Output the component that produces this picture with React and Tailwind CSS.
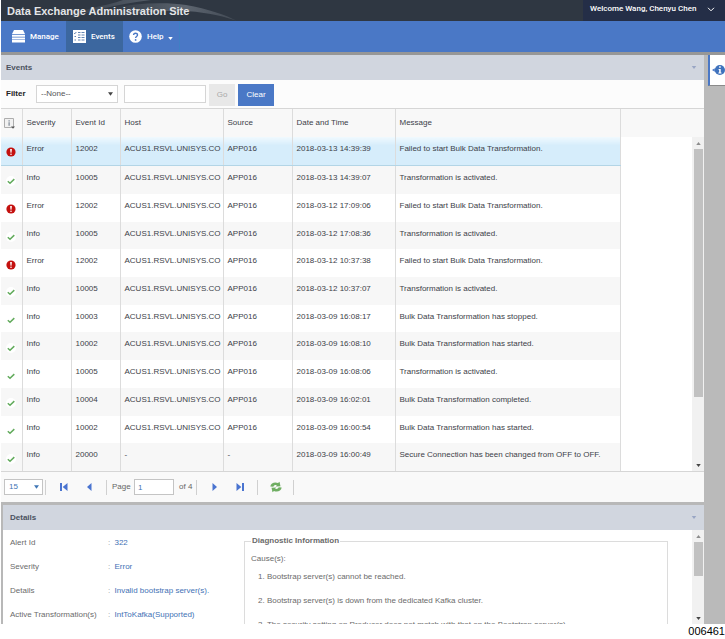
import { useState } from 'react'
import clsx from 'clsx'

const EVENTS = [
    { severity: 'Error', id: '12002', host: 'ACUS1.RSVL.UNISYS.CO', source: 'APP016', date: '2018-03-13 14:39:39', message: 'Failed to start Bulk Data Transformation.' },
    { severity: 'Info', id: '10005', host: 'ACUS1.RSVL.UNISYS.CO', source: 'APP016', date: '2018-03-13 14:39:07', message: 'Transformation is activated.' },
    { severity: 'Error', id: '12002', host: 'ACUS1.RSVL.UNISYS.CO', source: 'APP016', date: '2018-03-12 17:09:06', message: 'Failed to start Bulk Data Transformation.' },
    { severity: 'Info', id: '10005', host: 'ACUS1.RSVL.UNISYS.CO', source: 'APP016', date: '2018-03-12 17:08:36', message: 'Transformation is activated.' },
    { severity: 'Error', id: '12002', host: 'ACUS1.RSVL.UNISYS.CO', source: 'APP016', date: '2018-03-12 10:37:38', message: 'Failed to start Bulk Data Transformation.' },
    { severity: 'Info', id: '10005', host: 'ACUS1.RSVL.UNISYS.CO', source: 'APP016', date: '2018-03-12 10:37:07', message: 'Transformation is activated.' },
    { severity: 'Info', id: '10003', host: 'ACUS1.RSVL.UNISYS.CO', source: 'APP016', date: '2018-03-09 16:08:17', message: 'Bulk Data Transformation has stopped.' },
    { severity: 'Info', id: '10002', host: 'ACUS1.RSVL.UNISYS.CO', source: 'APP016', date: '2018-03-09 16:08:10', message: 'Bulk Data Transformation has started.' },
    { severity: 'Info', id: '10005', host: 'ACUS1.RSVL.UNISYS.CO', source: 'APP016', date: '2018-03-09 16:08:06', message: 'Transformation is activated.' },
    { severity: 'Info', id: '10004', host: 'ACUS1.RSVL.UNISYS.CO', source: 'APP016', date: '2018-03-09 16:02:01', message: 'Bulk Data Transformation completed.' },
    { severity: 'Info', id: '10002', host: 'ACUS1.RSVL.UNISYS.CO', source: 'APP016', date: '2018-03-09 16:00:54', message: 'Bulk Data Transformation has started.' },
    { severity: 'Info', id: '20000', host: '-', source: '-', date: '2018-03-09 16:00:49', message: 'Secure Connection has been changed from OFF to OFF.' },
]

const DETAILS = [
    ['Alert Id', '322'],
    ['Severity', 'Error'],
    ['Details', 'Invalid bootstrap server(s).'],
    ['Active Transformation(s)', 'IntToKafka(Supported)'],
]

const CAUSES = [
    'Bootstrap server(s) cannot be reached.',
    'Bootstrap server(s) is down from the dedicated Kafka cluster.',
    'The security setting on Producer does not match with that on the Bootstrap server(s).',
]

const Triangle = ({ className, up }) => (
    <svg viewBox="0 0 6 4" className={clsx('shrink-0', className)} aria-hidden="true">
        <path d={up ? 'M0 4h6L3 0z' : 'M0 0h6L3 4z'} fill="currentColor" />
    </svg>
)

const SeverityIcon = ({ severity }) =>
    severity === 'Error' ? (
        <svg viewBox="0 0 10 10" className="size-[10px]" aria-hidden="true">
            <circle cx="5" cy="5" r="4.6" fill="#c4110f" />
            <path d="M4.1 2h1.8l-.4 3.8h-1z" fill="#fff" />
            <circle cx="5" cy="7.3" r=".8" fill="#fff" />
        </svg>
    ) : (
        <svg viewBox="0 0 10 10" className="size-[10px]" aria-hidden="true">
            <circle cx="5" cy="5" r="5" fill="#fff" />
            <path d="M1.8 5.2l2.2 2 4.3-4.1" fill="none" stroke="#62ab5c" strokeWidth="1.5" />
        </svg>
    )

const ScrollBar = ({ thumb }) => (
    <div className="flex w-3 shrink-0 grow flex-col items-center bg-[#f1f1f1]" aria-hidden="true">
        <div className="flex h-3 shrink-0 items-center">
            <Triangle up className="h-[3px] w-[5px] text-[#8c8c8c]" />
        </div>
        <div className={clsx('w-[9px] bg-[#c1c1c1]', thumb)} />
        <div className="mt-auto flex h-3 shrink-0 items-center">
            <Triangle className="h-[3px] w-[5px] text-[#454545]" />
        </div>
    </div>
)

const PanelHeader = ({ title, className }) => (
    <div className={clsx('flex h-[25px] items-center justify-between bg-[#d1d6df] pr-[7px] font-bold text-[#4b5260]', className)}>
        <h2>{title}</h2>
        <button type="button" aria-label={`Collapse ${title}`}>
            <Triangle className="h-[3px] w-[6px] text-[#99a6c4]" />
        </button>
    </div>
)

const Separator = () => <div className="h-[15px] w-px bg-[#d0d0d0]" />

const PagerButton = ({ label, children }) => (
    <button type="button" aria-label={label} className="flex w-[25px] justify-center">
        <svg viewBox="0 0 10 10" className="size-[10px]" fill="#4a74d0">
            {children}
        </svg>
    </button>
)

const TopBar = () => (
    <header className="relative flex h-[21px] items-center justify-between overflow-hidden bg-[#2f3742]">
        <svg viewBox="0 0 480 21" className="absolute left-0 top-0 h-[21px] w-[480px]" aria-hidden="true">
            <defs>
                <linearGradient id="arc" x1="0" x2="1">
                    <stop offset="0" stopColor="#8b939d" stopOpacity="0" />
                    <stop offset=".6" stopColor="#8b939d" stopOpacity=".5" />
                    <stop offset="1" stopColor="#8b939d" stopOpacity=".2" />
                </linearGradient>
                <linearGradient id="band" x1="0" x2="1">
                    <stop offset="0" stopColor="#79828d" stopOpacity="0" />
                    <stop offset="1" stopColor="#79828d" stopOpacity=".5" />
                </linearGradient>
            </defs>
            <path d="M50 21C80 9 105 6 122 0h28C115 4 85 12 65 21z" fill="url(#band)" />
            <path d="M110 8C135 3 165 2 185 5c22 4 40 10 50 15.5-18-6-36-9-54-9.5-25-.5-48 2-71 7z" fill="url(#arc)" />
        </svg>
        <h1 className="relative pl-[6px] text-[11px] font-bold text-[#e4e5e7]">Data Exchange Administration Site</h1>
        <button type="button" className="relative flex h-full w-[142px] items-center justify-between bg-[#242e47] pr-[10px] pb-[3px] pl-[7px] font-[Roboto,sans-serif] font-medium text-white">
            Welcome Wang, Chenyu Chen
            <svg viewBox="0 0 8 5" className="h-[5px] w-2" fill="none" stroke="#fff" aria-hidden="true">
                <path d="M1 .8l3 3 3-3" />
            </svg>
        </button>
    </header>
)

const NavBar = () => (
    <nav className="flex h-[31px] bg-[#4a78c6] font-[Roboto,sans-serif] font-medium text-white">
        <a href="#manage" className="flex w-[65px] items-center gap-[5px] pl-[11px]">
            <svg viewBox="0 0 13 13" className="size-[13px]" fill="#fff" aria-hidden="true">
                <path d="M2 0h9l2 4H0zM0 4.7h13v2H0zM0 7.4h13v2H0zM0 10.1h13v2.4H0z" />
            </svg>
            Manage
        </a>
        <a href="#events" className="flex w-[57px] items-center gap-[5px] bg-[#3c679f] pl-[7px]">
            <svg viewBox="0 0 13 13" className="size-[13px]" aria-hidden="true">
                <path d="M0 0h13v13H0z" fill="#fff" />
                <path d="M5 2.5h2.5M8.5 2.5h3M5 5h2.5M8.5 5h3M5 7.5h2.5M8.5 7.5h3M5 10h2.5M8.5 10h3M1 3l.8.8L3.3 2M1.5 6.5h1.5M1.5 10h1.5" fill="none" stroke="#3c679f" strokeWidth=".8" />
            </svg>
            Events
        </a>
        <button type="button" className="flex w-[57px] items-center gap-[5px] border-r border-[#3f80c4] pl-[6px]">
            <svg viewBox="0 0 13 13" className="size-[13px]" aria-hidden="true">
                <circle cx="6.5" cy="6.5" r="6.3" fill="#fff" />
                <path d="M4.6 5c0-2.4 3.9-2.4 3.9 0 0 1.5-1.9 1.4-1.9 3" fill="none" stroke="#4a78c6" strokeWidth="1.4" />
                <circle cx="6.6" cy="9.9" r=".9" fill="#4a78c6" />
            </svg>
            Help
            <Triangle className="-ml-px mt-1 h-[3px] w-[5px]" />
        </button>
    </nav>
)

const FilterBar = () => {
    const [text, setText] = useState('')

    return (
        <form className="flex h-7 items-start bg-[#fcfcfc] pl-[5px] pt-1" onSubmit={(e) => e.preventDefault()}>
            <label htmlFor="filter" className="w-[30px] leading-[19px] font-bold text-[#222]">
                Filter
            </label>
            <div className="relative mt-px mr-[6px]">
                <select id="filter" className="h-[18px] w-[82px] appearance-none border border-[#d5d5d5] bg-white pl-1 text-[#555]">
                    <option>--None--</option>
                </select>
                <Triangle className="pointer-events-none absolute right-[5px] top-[7px] h-1 w-[5px] text-[#444]" />
            </div>
            <input
                type="text"
                aria-label="Filter text"
                className="mt-px mr-[3px] h-[18px] w-[82px] border border-[#d5d5d5] bg-white px-1"
                value={text}
                onChange={(e) => setText(e.target.value)}
            />
            <button type="submit" className="mr-[3px] h-[22px] w-[26px] bg-[#e8e8e8] text-[#a8a8a8]">
                Go
            </button>
            <button type="button" className="h-[22px] w-9 bg-[#4a78c6] text-white" onClick={() => setText('')}>
                Clear
            </button>
        </form>
    )
}

const EventsTable = () => {
    const [selected, setSelected] = useState(0)
    const head = 'border-r border-[#dcdcdc] pl-1 text-left font-normal'
    const cell = 'overflow-hidden border-r border-[#dcdcdc] pl-1 pt-[6px] align-top whitespace-nowrap'

    return (
        <div className="flex h-[364px] overflow-hidden border-y border-[#d6d6d6] bg-white">
            <table className="h-[362px] min-w-0 grow table-fixed text-[#3c4148]">
                <colgroup>
                    <col className="w-[21px]" />
                    <col className="w-[49px]" />
                    <col className="w-[49px]" />
                    <col className="w-[103px]" />
                    <col className="w-[69px]" />
                    <col className="w-[103px]" />
                    <col className="w-[225px]" />
                    <col />
                </colgroup>
                <thead>
                    <tr className="h-7 bg-[#f8f8f8]">
                        <th className="border-r border-[#dcdcdc] pl-[3px]">
                            <svg viewBox="0 0 11 11" className="size-[11px]" role="img" aria-label="Status">
                                <path d="M.5.5h9v9h-9z" fill="#f1f1f1" stroke="#adadad" />
                                <path d="M4.5 2.2h1.2v1.2H4.5zM4.5 4.2h1.2v3.6H4.5z" fill="#7c8794" />
                                <path d="M7 8.5h4l-2 2.2z" fill="#555" />
                            </svg>
                        </th>
                        <th className={head}>Severity</th>
                        <th className={head}>Event Id</th>
                        <th className={head}>Host</th>
                        <th className={head}>Source</th>
                        <th className={head}>Date and Time</th>
                        <th className={head}>Message</th>
                        <td />
                    </tr>
                </thead>
                <tbody>
                    {EVENTS.map((event, i) => (
                        <tr key={i} onClick={() => setSelected(i)}>
                            {[<SeverityIcon key="icon" severity={event.severity} />, event.severity, event.id, event.host, event.source, event.date, event.message].map((value, col) => (
                                <td
                                    key={col}
                                    className={clsx(
                                        col === 0 ? 'border-r border-[#dcdcdc] pl-[5px] pt-[3px]' : cell,
                                        i === selected ? 'border-b border-b-[#b3d5e6] bg-linear-to-b from-[#f0f9fe] to-[#d6edfb] to-30%' : i % 2 === 1 && 'bg-[#f7f7f7]'
                                    )}
                                >
                                    {value}
                                </td>
                            ))}
                            <td />
                        </tr>
                    ))}
                </tbody>
            </table>
            <div className="flex w-3 flex-col">
                <div className="h-7 bg-[#f8f8f8]" />
                <ScrollBar thumb="h-[248px]" />
            </div>
        </div>
    )
}

const Pager = () => (
    <div className="flex h-[30px] items-center bg-[#f9f9f9] pl-[3px] text-[#666]">
        <div className="relative mr-[2px]">
            <select aria-label="Rows per page" className="block h-4 w-[39px] appearance-none border border-[#c4c4c4] bg-white pl-1 text-[#3f76b5]">
                <option>15</option>
            </select>
            <Triangle className="pointer-events-none absolute right-1 top-[6px] h-1 w-[5px] text-[#3f76b5]" />
        </div>
        <Separator />
        <div className="flex w-[60px] pl-[5px]">
            <PagerButton label="First page">
                <path d="M1 1h2v8H1zM8.5 1v8L3.7 5z" />
            </PagerButton>
            <PagerButton label="Previous page">
                <path d="M7.5 1v8L3 5z" />
            </PagerButton>
        </div>
        <Separator />
        <label htmlFor="page" className="w-[27px] pl-[5px]">
            Page
        </label>
        <input id="page" type="text" defaultValue="1" className="h-4 w-10 border border-[#c4c4c4] bg-white pl-[3px] text-[#3f76b5]" />
        <span className="w-[22px] pl-[5px]">of 4</span>
        <Separator />
        <div className="flex w-[60px] pl-[5px]">
            <PagerButton label="Next page">
                <path d="M2.5 1v8L7 5z" />
            </PagerButton>
            <PagerButton label="Last page">
                <path d="M1.5 1v8l4.8-4zM7 1h2v8H7z" />
            </PagerButton>
        </div>
        <Separator />
        <button type="button" aria-label="Refresh" className="flex w-[35px] justify-center">
            <svg viewBox="0 0 12 12" className="size-3" fill="#6fae62" aria-hidden="true">
                <path d="M.3 5.5C.8 2.200 4.500.5 8 2L9.500.8l1 4.400-4.700.3 1-1.200C5.200 3.800 4 4.300 3.300 5.800z" />
                <path d="M11.700 6.500c-.5 3.300-4.200 5-7.700 3.500L2.500 11.200l-1-4.400 4.700-.3-1 1.200c1.600.5 2.800 0 3.500-1.500z" />
            </svg>
        </button>
        <Separator />
    </div>
)

const DetailsPanel = () => (
    <section className="border-l-2 border-t-[3px] border-[#b8b8b8] bg-white">
        <PanelHeader title="Details" className="pl-[7px]" />
        <div className="flex h-[94px] overflow-hidden text-[#6b6b6b]">
            <dl className="w-[241px] shrink-0 pt-px pl-[7px]">
                {DETAILS.map(([label, value]) => (
                    <div key={label} className="flex leading-6">
                        <dt className="w-[98px] whitespace-nowrap">{label}</dt>
                        <dd className="text-[#3f72b5]">
                            <span className="mr-[2px] text-[#999]">:</span> {value}
                        </dd>
                    </div>
                ))}
            </dl>
            <fieldset className="mt-[6px] mr-6 h-[140px] min-w-0 grow border border-[#dcdcdc] px-[6px]">
                <legend className="px-px leading-[10px] font-bold">Diagnostic Information</legend>
                <p className="pt-[7px] leading-3">Cause(s):</p>
                <ol className="list-inside list-decimal pl-[7px] leading-6 whitespace-nowrap">
                    {CAUSES.map((cause) => (
                        <li key={cause}>{cause}</li>
                    ))}
                </ol>
            </fieldset>
            <div className="flex">
                <ScrollBar thumb="h-[34px]" />
            </div>
        </div>
    </section>
)

const App = () => (
    <div className="bg-white pl-px font-['Liberation_Sans',Arial,sans-serif] text-[8px] leading-3">
        <TopBar />
        <NavBar />
        <div className="flex border-t-[3px] border-[#979797] bg-[#bababa]">
            <main className="min-w-0 grow">
                <PanelHeader title="Events" className="pl-[5px]" />
                <FilterBar />
                <EventsTable />
                <Pager />
                <DetailsPanel />
            </main>
            <aside className="w-[21px] shrink-0 pl-1">
                <button type="button" aria-label="Information" className="flex h-[31px] w-full items-center border-l-2 border-b border-l-[#4a78c6] border-b-[#8a8a8a] bg-white pl-[2px]">
                    <svg viewBox="0 0 14 12" className="h-3 w-[14px]" aria-hidden="true">
                        <path d="M0 6l3-2v4z" fill="#4a78c6" />
                        <circle cx="8.5" cy="6" r="5.5" fill="#3f72bd" />
                        <path d="M7.7 2h1.7v1.7H7.7zM7 4.8h2.4v3.9h.8v1H6.9v-1h.8V5.8H7z" fill="#fff" />
                    </svg>
                </button>
            </aside>
        </div>
        <footer className="text-right text-[11px] leading-[15px] text-black">006461</footer>
    </div>
)

export default App
